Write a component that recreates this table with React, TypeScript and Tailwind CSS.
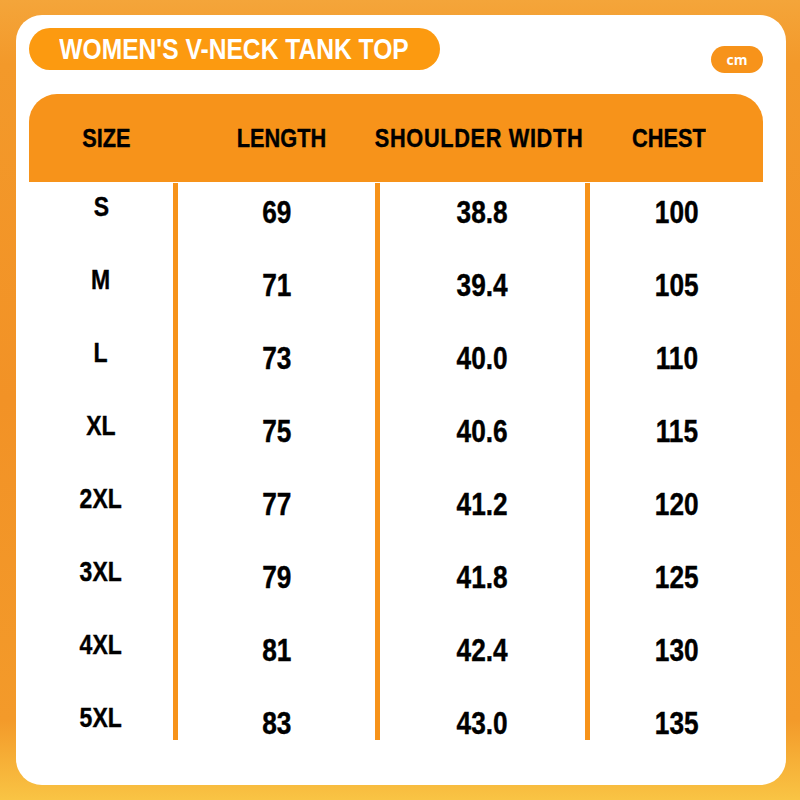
import React from 'react';

const FONT = '"Liberation Sans", Arial, sans-serif';

const ROWS: readonly [string, string, string, string][] = [
  ['S', '69', '38.8', '100'],
  ['M', '71', '39.4', '105'],
  ['L', '73', '40.0', '110'],
  ['XL', '75', '40.6', '115'],
  ['2XL', '77', '41.2', '120'],
  ['3XL', '79', '41.8', '125'],
  ['4XL', '81', '42.4', '130'],
  ['5XL', '83', '43.0', '135'],
];

// narrow look: Liberation Sans squeezed horizontally, like Arial Narrow
function Narrow({ children }: { children: React.ReactNode }) {
  return <span className="inline-block shrink-0 origin-center scale-x-[0.82] whitespace-nowrap">{children}</span>;
}

function Column({ idx, divider }: { idx: number; divider: boolean }) {
  const isSize = idx === 0;
  return (
    <div
      className={`flex h-[557px] flex-col ${divider ? 'border-l-[5px] border-[#f7931a]' : ''}`}
    >
      {ROWS.map((r) => (
        <div
          key={r[0]}
          className={`flex h-[73px] shrink-0 justify-center leading-none font-bold text-black [-webkit-text-stroke:0.4px_black] ${
            isSize ? 'pt-[10px] text-[28px]' : 'pt-[13px] text-[32px]'
          }`}
        >
          <Narrow>{r[idx]}</Narrow>
        </div>
      ))}
    </div>
  );
}

export default function App() {
  return (
    <div
      className="h-[800px] w-[800px] overflow-hidden bg-[linear-gradient(180deg,#f4a53a_0%,#f3992a_8%,#f29226_50%,#f39a2a_90%,#f9c444_100%)] pt-[15px] pl-[16px]"
      style={{ fontFamily: FONT }}
    >
      <div className="h-[770px] w-[770px] rounded-[26px] bg-white pt-[13px] pl-[13px]">
        {/* title row */}
        <div className="flex w-[734px] items-start justify-between">
          <div className="flex h-[42px] w-[411px] items-center justify-center rounded-[21px] bg-[#fc9a10] text-[30px] leading-none font-bold text-white">
            <Narrow>WOMEN'S V-NECK TANK TOP</Narrow>
          </div>
          <div
            className="mt-[18px] flex h-[27px] w-[52px] items-center justify-center rounded-full bg-[#f7931a] text-[14px] font-bold text-white"
            style={{ fontFamily: '"Open Sans", sans-serif' }}
          >
            cm
          </div>
        </div>

        {/* header bar */}
        <div className="mt-[21px] grid h-[88px] w-[734px] grid-cols-[144px_202px_210px_178px] items-center rounded-t-[28px] bg-[#f7931a] text-[26.5px] leading-none font-bold text-black [-webkit-text-stroke:0.4px_black]">
          <div className="flex justify-center pl-[10px]"><Narrow>SIZE</Narrow></div>
          <div className="flex justify-center pl-[14px]"><Narrow>LENGTH</Narrow></div>
          <div className="flex justify-center pr-[2px] tracking-[0.8px]"><Narrow>SHOULDER WIDTH</Narrow></div>
          <div className="flex justify-center pr-[10px]"><Narrow>CHEST</Narrow></div>
        </div>

        {/* body */}
        <div className="mt-[1px] grid w-[734px] grid-cols-[144px_202px_210px_178px]">
          <Column idx={0} divider={false} />
          <Column idx={1} divider />
          <Column idx={2} divider />
          <Column idx={3} divider />
        </div>
      </div>
    </div>
  );
}
